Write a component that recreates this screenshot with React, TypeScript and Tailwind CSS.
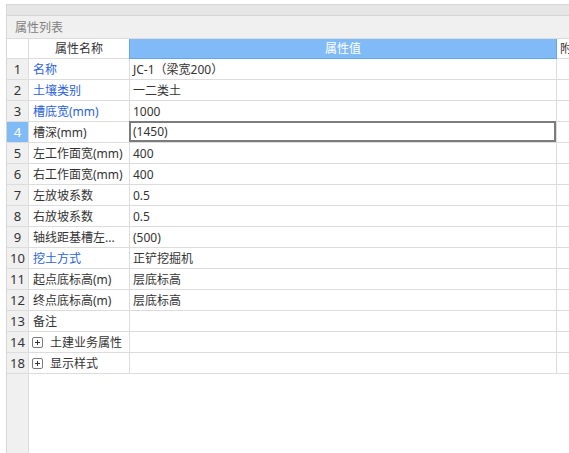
import React from "react";

type Row = { n: number; name: string; value: string; blue?: boolean; expand?: boolean; selected?: boolean };

const rows: Row[] = [
  { n: 1, name: "名称", value: "JC-1（梁宽200）", blue: true },
  { n: 2, name: "土壤类别", value: "一二类土", blue: true },
  { n: 3, name: "槽底宽(mm)", value: "1000", blue: true },
  { n: 4, name: "槽深(mm)", value: "(1450)", selected: true },
  { n: 5, name: "左工作面宽(mm)", value: "400" },
  { n: 6, name: "右工作面宽(mm)", value: "400" },
  { n: 7, name: "左放坡系数", value: "0.5" },
  { n: 8, name: "右放坡系数", value: "0.5" },
  { n: 9, name: "轴线距基槽左...", value: "(500)" },
  { n: 10, name: "挖土方式", value: "正铲挖掘机", blue: true },
  { n: 11, name: "起点底标高(m)", value: "层底标高" },
  { n: 12, name: "终点底标高(m)", value: "层底标高" },
  { n: 13, name: "备注", value: "" },
  { n: 14, name: "土建业务属性", value: "", expand: true },
  { n: 18, name: "显示样式", value: "", expand: true },
];

function PlusBox() {
  return (
    <svg width="11" height="11" viewBox="0 0 11 11" className="shrink-0">
      <rect x="0.5" y="0.5" width="10" height="10" rx="1.5" fill="white" stroke="#7a7a7a" />
      <path d="M3 5.5h5M5.5 3v5" stroke="#333" strokeWidth="1" />
    </svg>
  );
}

export default function App() {
  return (
    <div
      className="w-[569px] h-[453px] bg-white overflow-hidden pl-[6px] pt-[4px] text-[12px] text-[#333]"
      style={{ fontFamily: '"Noto Sans", "Noto Sans CJK SC", sans-serif' }}
    >
      <div className="w-[700px] h-full border-l border-t border-[#d6d6d6] flex flex-col">
        <div className="h-[11px] bg-[#e6e6e6] border-b border-[#d6d6d6]" />
        <div className="h-[22px] bg-[#f0f0f0] flex items-center pl-[8px] pt-px text-[#808080] leading-none">属性列表</div>
        {/* header */}
        <div className="flex h-[21px] border-t border-[#dcdcdc] leading-none">
          <div className="w-[22px] bg-white border-r border-b border-[#dcdcdc]" />
          <div className="w-[101px] bg-white border-r border-b border-[#dcdcdc] flex items-center justify-center pt-px">属性名称</div>
          <div className="w-[428px] -ml-px bg-[#80bbf8] border border-t-0 border-[#63a6f0] flex items-center justify-center pt-px text-white">属性值</div>
          <div className="flex-1 bg-white border-b border-[#dcdcdc] flex items-center pl-[3px] pt-px">附加</div>
        </div>
        {rows.map((r) => (
          <div key={r.n} className="flex h-[21px] leading-none">
            <div
              className={
                r.selected
                  ? "w-[22px] bg-[#80bbf8] text-white border-r border-b border-[#dcdcdc] flex items-center justify-center pt-px text-[13px]"
                  : "w-[22px] bg-[#f0f0f0] border-r border-b border-[#dcdcdc] flex items-center justify-center pt-px text-[13px]"
              }
            >
              {r.n}
            </div>
            <div
              className={
                "w-[101px] border-r border-b border-[#dcdcdc] flex items-center pt-px whitespace-nowrap overflow-hidden " +
                (r.expand ? "pl-[3px] " : "pl-[4px] ") +
                (r.blue ? "text-[#2a62e0]" : "text-[#333]")
              }
            >
              {r.expand ? (
                <span className="flex items-center gap-[7px]">
                  <PlusBox />
                  <span>{r.name}</span>
                </span>
              ) : (
                r.name
              )}
            </div>
            <div
              className={
                "w-[427px] border-r border-b border-[#dcdcdc] flex items-center pl-[3px] pt-px whitespace-nowrap " +
                (r.selected ? "shadow-[inset_0_0_0_2px_#7c7c7c] -mt-px h-[22px] -ml-px w-[428px] pl-[4px]" : "")
              }
            >
              {r.value}
            </div>
            <div className="flex-1 border-b border-[#dcdcdc]" />
          </div>
        ))}
        <div className="flex flex-1">
          <div className="w-[22px] bg-[#f0f0f0] border-r border-[#dcdcdc]" />
          <div className="flex-1 bg-white" />
        </div>
      </div>
    </div>
  );
}
